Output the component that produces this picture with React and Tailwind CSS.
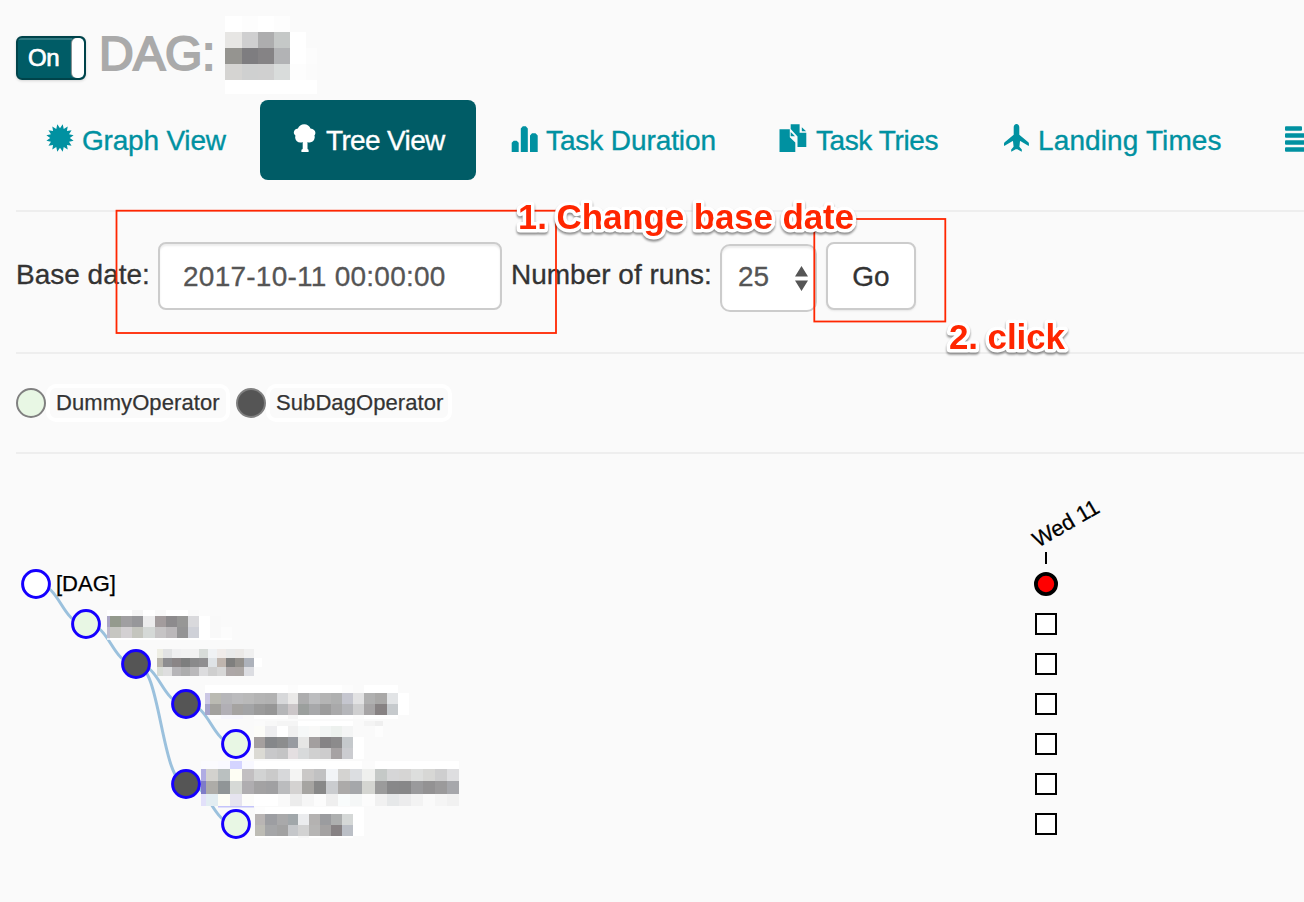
import React from "react";

const TITLE_MOSAIC = {
  xs: [225, 242, 258, 274, 290, 306, 317],
  ys: [16, 32, 48, 64, 80, 94],
  rows: [
    "#fff #fdfdfd #fff #fdfdfd - -",
    "#e7e6e4 #cfcfd0 #adadae #c5c8c7 #fff -",
    "#959490 #7e7d80 #858385 #b2b3b5 #fff #fcfcfc",
    "#d5d4d2 #cfd0d0 #d0d0d0 #d9dcdb #fdfdfd #fbfbfb",
    "#fff #fff #fff #fff #fff #fff",
  ],
};

const LABEL_MOSAICS = [
  {
    xs: [107, 110, 121, 132, 143, 155, 166, 177, 188, 199, 210, 221, 232],
    ys: [610, 616, 627, 638, 640],
    rows: [
      "#fff #fff #fff #f5f5f5 #fff #f9f9f9 #fff #fff #f9f9f9 #fbfbfb - -",
      "#aaa5c4 #949a8d #a09fa1 #97979a #ececed #a39c9d #8d8b8d #979796 #d9d9dc #fff #f9f9f9 -",
      "#bfbccc #c6c6c1 #d3d0d2 #c4c5be #d5d9d7 #c6c4c5 #bbb8ba #949495 #cfd1d8 #fff #f9f9f9 #fcfcfc",
      "#e8f4fa #fff #fff #fff #fff #fff #fff #fff #fff #fff #fff #fff",
    ],
  },
  {
    xs: [157, 163, 172, 181, 190, 199, 208, 217, 226, 235, 244, 254, 262],
    ys: [649, 658, 667, 676],
    rows: [
      "#eeeee4 #e2e3e4 #f0f0f1 #f2f2f2 #f2f2f2 #d8dcd9 #f0f2f4 #f0ecea #e9eaea #ebe9e7 #f0f0f0 -",
      "#b9b6ad #8d8d90 #8a8586 #7d7e7e #8a8a8b #8f8e90 #dfe3e6 #bfb5ae #7f7f7e #93908c #adb2bb #fff",
      "#d8dcd6 #dededf #b6b5b8 #adadae #bab9bb #dcdcde #cfcfcf #d7d7d7 #ada7a7 #aca7a5 #dcdde2 -",
    ],
  },
  {
    xs: [205, 210, 221, 232, 243, 254, 265, 277, 288, 298, 309, 320, 331, 342, 353, 364, 375, 387, 398, 409],
    ys: [685, 693, 704, 715, 719],
    rows: [
      "#fff #fff #fff #fff #fff #fff #fff #fff #fcfcfc #fff #fff #fff #fff #fcfcfc #fafafa #fff #fff #fff -",
      "#ccc8e4 #babab2 #b6b6b9 #bbbbbd #b9b9b9 #b4b4b4 #b2b2b2 #d7d8da #eae9e8 #adadae #bcbdbf #b4b4b4 #afb0b0 #c5c6cf #e2e2e3 #b0b0b0 #a9a8a7 #e2e4e6 #fff",
      "#a7a5cb #a2a19d #b1afb5 #a5a3a1 #a3a4a6 #9b9b9b #969696 #b5b6b8 #cbc6c8 #9b9f9d #a7a8aa #9c9c9c #a9a9aa #b5b6ba #cfcfd0 #a6a4a5 #878283 #c6cacd #fff",
      "- #fcfcfc #f7f7fd #f7f7fd #fafafa #fff #fff #fdfdfd #f5f5f5 #fff #fff #fff #fff #fff #fcfcfc #fff #fff #fff -",
    ],
  },
  {
    xs: [254, 265, 277, 288, 298, 309, 320, 331, 342, 353, 364, 375, 383],
    ys: [721, 726, 737, 748, 759],
    rows: [
      "#fbfbfb #f8f8f8 #f5f5f5 #f5f5f5 #fff #fff #fff #fff #fff #fafafa #f4f4f4 #efefef",
      "#fcfcf8 #eeeef0 #fff #f0f0f0 #f6f8f8 #f9f9f8 #f2f5f4 #edf1ee #f4f5f5 - - #fdfdfd",
      "#a5a09f #85878a #8c8d8e #989ba1 #e6e6e5 #a39f9f #858385 #8c8b8c #c5c9cc #fff - -",
      "#dbdad4 #c8c8ca #c4c4c5 #e4dfe1 #d8dadb #d0d0d0 #cdcccd #a6a2a3 #cbccd0 #fff - -",
    ],
  },
  {
    xs: [201, 206, 218, 230, 242, 254, 266, 278, 290, 302, 314, 326, 338, 350, 362, 375, 387, 399, 411, 423, 435, 447, 459],
    ys: [761, 769, 781, 794, 806],
    rows: [
      "#fbfbfe #fbfbfe #f9f9ff #d4d4ff #f8f8ff #fff #fff #fff #fff #fff #fff #fff #fff #fff #fbfbfb #fff #fff #fff #fff #fff #fff #fff",
      "#b0ace2 #d3d2ce #bac0c0 #fefef4 #c2bfc1 #d2d3d3 #cacaca #d7d8da #f4f4f3 #cac8c7 #c1c1c2 #f2f4f7 #d4d3d1 #dcdee1 #eff0ee #c5c9c7 #d6d6d7 #d6d5d4 #dddedd #d7d7d5 #cececf #dedee0",
      "#7e7bc8 #adaca8 #909597 #d6d9d6 #afadb0 #a3a2a3 #a0a0a2 #bbbcbe #d4d2d1 #a6a4a1 #888888 #cacccf #acaaa9 #a5a7aa #d4d5d1 #9b9b9b #888889 #878788 #9a9a9c #939293 #9b9a9b #a6a7ab",
      "#e2e0fa #e2edf2 #fdfdf6 #e6e4ef #fcfcfa #fff #fff #fafafa #ececec #f6f6f6 #fcfcfc #efefef #f9fcfc #f5f7f7 #fcfcfc #f1f1f1 #e6e8e9 #ececed #f3f3f3 #fafafa #f5f5f5 #f1f1f1",
    ],
  },
  {
    xs: [255, 265, 277, 288, 298, 309, 320, 331, 342, 353, 364],
    ys: [807, 814, 825, 836, 838],
    rows: [
      "#fdfdfd #fff #fff #fff #fff #fff #fff #fff #fff #fff",
      "#b9b5b4 #9d9ea2 #a9a9aa #a1a7aa #ebecee #b4b2b1 #9b9c9f #adafaf #d5d8d7 #fff",
      "#bdbcb5 #a5a6a8 #a2a2a2 #c5c7ca #d2d2d2 #b6b5b4 #a4a2a2 #878284 #bbbfc6 #fff",
      "#fff #fff #fff #fff #f7f7f7 #fff #fff #fff #fff -",
    ],
  },
];

function Mosaic({ xs, ys, rows }) {
  return (
    <g shapeRendering="crispEdges">
      {rows.map((row, r) =>
        row.split(" ").map((c, i) =>
          c === "-" ? null : (
            <rect key={r + "-" + i} x={xs[i]} y={ys[r]} width={xs[i + 1] - xs[i]} height={ys[r + 1] - ys[r]} fill={c} />
          )
        )
      )}
    </g>
  );
}

const burst = Array.from({ length: 32 }, (_, i) => {
  const a = ((i + 1) * Math.PI) / 16;
  const r = i % 2 === 0 ? 13.9 : 9.8;
  return (14 + r * Math.cos(a)).toFixed(2) + "," + (14 + r * Math.sin(a)).toFixed(2);
}).join(" ");

const ICONS = {
  burst: <polygon points={burst} />,
  tree: (
    <path d="M14.200.2c3 0 5.400 1.700 6.300 4.300 2.900.4 4.900 2 4.900 4.300 0 1.200-.4 2-1 2.800.3.7.4 1.400.3 2.200-.4 2.800-2.600 4.800-5.200 4.700-.9 0-1.400-.2-2-.6V24.500c0 .8.4 1.100 1.100 1.200v2.300h-7.200v-2.300c.8-.1 1.300-.4 1.300-1.200V17.900c-.7.5-1.400.7-2.300.7-2.700 0-4.900-1.900-5.200-4.600-.1-.8 0-1.500.3-2.200-.8-.8-1.700-1.800-1.700-3.200 0-2.200 1.600-4 4.100-4.200C8.900 2 11.200.2 14.200.2z" />
  ),
  bars: (
    <path d="M1.700 28V18.700l2-2h3l2 2V28zM10.800 28V4.500l2-2.300h3l2 2.300V28zM20 28V11.400l2-2.200h3.500l2.200 2.200V28z" />
  ),
  copy: (
    <g>
      <path d="M-.5 5.200H9.800V13.200l5.500 5.300V28H-.5z" />
      <path d="M10.700 8l4.300 4.300h-4.300z" />
      <path d="M10.700.2h8.900v8.500h6.700v14.300h-8.800V12.500L10.700 5z" />
      <path d="M21.800 3.200l4.300 4h-4.300z" />
    </g>
  ),
  plane: (
    <path d="M14.500 0c1.700 0 2.800 1.300 2.800 3.200v7.500l9.300 7.800c.5.6.4 2.500.1 3.600l-8.400-5-.3.200-.6 5.500 2.400 2.600v2.300l-4.500-2.500h-1.600l-4.500 2.500v-2.300l2.400-2.600-.6-5.500-.3-.2-8.500 5c-.3-1.100-.4-3 .2-3.600l9.300-7.800V3.200C11.700 1.300 12.800 0 14.500 0z" />
  ),
  lines: (
    <g>
      <rect x="-1" y="2.200" width="17" height="4.600" rx="1" />
      <rect x="-1" y="9.200" width="29" height="4.600" rx="1" />
      <rect x="-1" y="16.200" width="24" height="4.600" rx="1" />
      <rect x="-1" y="23.200" width="29" height="4.600" rx="1" />
    </g>
  ),
};

function Tab({ icon, label, width, active }) {
  return (
    <a
      className={
        "flex h-20 shrink-0 items-center gap-2 rounded-lg pl-[30px] text-[28px] whitespace-nowrap [-webkit-text-stroke:0.35px_currentColor] " +
        width +
        (active ? " bg-[#005c66] text-white" : " text-[#0091a1]")
      }
    >
      <svg className="h-7 w-7 shrink-0 overflow-visible" viewBox="0 0 28 28" fill="currentColor">
        <g transform="translate(0,-2)">{ICONS[icon]}</g>
      </svg>
      <span className="pt-0.5">{label}</span>
    </a>
  );
}

function Operator({ name, fill, width }) {
  return (
    <div className="flex items-center">
      <span className={"h-[30px] w-[30px] rounded-full border-2 border-[#808080] " + fill} />
      <span className={"flex h-[38px] items-center rounded-[10px] border-4 border-white pb-0.5 pl-1.5 text-[22px] tracking-[0.08px] whitespace-nowrap [-webkit-text-stroke:0.25px_currentColor] " + width}>
        {name}
      </span>
    </div>
  );
}

const NODES = [
  [36, 584, "#fff"],
  [86, 624, "#e8f7e4"],
  [136, 664, "#555"],
  [186, 704, "#555"],
  [236, 744, "#e8f7e4"],
  [186, 784, "#555"],
  [236, 824, "#e8f7e4"],
];
const LINKS = [[0, 1], [1, 2], [2, 3], [3, 4], [2, 5], [5, 6]];

function TreeChart() {
  return (
    <svg className="block h-[448px] w-[1304px]" viewBox="0 454 1304 448" fontFamily="'Liberation Sans', Arial, sans-serif">
      {LINKS.map(([a, b]) => {
        const [x0, y0] = NODES[a];
        const [x1, y1] = NODES[b];
        const m = (x0 + x1) / 2;
        return <path key={a + "-" + b} d={`M${x0},${y0}C${m},${y0} ${m},${y1} ${x1},${y1}`} fill="none" stroke="#9bc1dd" strokeWidth="3" />;
      })}
      {LABEL_MOSAICS.map((m, i) => (
        <Mosaic key={i} {...m} />
      ))}
      <rect x="218" y="806" width="36" height="1.500" fill="#c4c4fa" />
      {NODES.map(([x, y, f]) => (
        <circle key={x + "-" + y} cx={x} cy={y} r="13.400" fill={f} stroke="#1500ff" strokeWidth="3" />
      ))}
      <g fontSize="22" stroke="#000" strokeWidth="0.250">
        <text x="56" y="591">[DAG]</text>
        <text transform="translate(1038,548) rotate(-30)" textLength="73">Wed 11</text>
      </g>
      <rect x="1045" y="552" width="2" height="12" />
      <circle cx="1046" cy="584" r="10.100" fill="#f00" stroke="#000" strokeWidth="3.800" />
      {[624, 664, 704, 744, 784, 824].map((y) => (
        <rect key={y} x="1036" y={y - 10} width="20" height="20" fill="#fff" stroke="#000" strokeWidth="2" />
      ))}
    </svg>
  );
}

function Annotations() {
  return (
    <svg
      className="pointer-events-none absolute top-0 left-0 h-[902px] w-[1304px]"
      viewBox="0 0 1304 902"
      fontFamily="'Liberation Sans', Arial, sans-serif"
    >
      <g fill="none" stroke="#ff2600" strokeWidth="1.800">
        <rect x="116.500" y="210.700" width="439.500" height="122.300" />
        <rect x="814.300" y="219" width="131" height="102.500" />
      </g>
      <g
        className="drop-shadow-[0_2px_1px_rgba(0,0,0,0.45)]"
        stroke="#fff"
        strokeWidth="7"
        strokeLinejoin="round"
        fill="#ff2600"
        paintOrder="stroke"
        fontSize="35"
        fontWeight="700"
      >
        <text x="518" y="229" textLength="336">1. Change base date</text>
        <text x="949" y="349" textLength="116">2. click</text>
      </g>
    </svg>
  );
}

export default function App() {
  return (
    <div className="relative h-[902px] w-[1304px] overflow-hidden bg-[#fafafa] font-['Liberation_Sans',Arial,sans-serif] text-[#333]">
      <header className="flex h-[100px] pl-4">
        <div className="mt-9 flex h-11 w-[70px] overflow-hidden rounded-md border-2 border-[#00434a] bg-[#005c66] shadow-[0_1px_3px_rgba(0,0,0,0.15)]">
          <span className="flex flex-1 items-center pl-2.5 text-[24px] tracking-[-0.5px] text-white shadow-[inset_0_2px_0_rgba(255,255,255,0.18)] [-webkit-text-stroke:0.7px_white]">On</span>
          <span className="w-3 rounded-[5px] bg-white shadow-[-1px_0_1px_#999]" />
        </div>
        <h1 className="mt-[27px] ml-[13px] w-[126px] text-[48px] leading-[54px] tracking-[-0.3px] whitespace-nowrap text-[#aaa] [-webkit-text-stroke:2px_#aaa]">DAG:</h1>
        <svg className="mt-4 h-[78px] w-[92px]" viewBox="225 16 92 78">
          <Mosaic {...TITLE_MOSAIC} />
        </svg>
      </header>
      <nav className="flex gap-1 pl-4">
        <Tab icon="burst" label="Graph View" width="w-[240px] tracking-[-0.2px]" />
        <Tab icon="tree" label="Tree View" width="w-[216px] tracking-[-0.65px]" active />
        <Tab icon="bars" label="Task Duration" width="w-[266px] tracking-[-0.1px]" />
        <Tab icon="copy" label="Task Tries" width="w-[218px] tracking-[-0.4px]" />
        <Tab icon="plane" label="Landing Times" width="w-[280px] tracking-[0.12px]" />
        <Tab icon="lines" label="" width="w-[200px]" />
      </nav>
      <hr className="mt-[30px] ml-4 border-t-2 border-[#eee]" />
      <form className="flex h-[140px] items-start pt-[30px] pl-4 text-[28px] whitespace-nowrap [-webkit-text-stroke:0.3px_currentColor]" onSubmit={(e) => e.preventDefault()}>
        <label className="w-[142px] pt-[17px] leading-8">Base date:</label>
        <input
          className="h-[68px] w-[344px] rounded-lg border-2 border-[#ccc] bg-white pt-0.5 pl-[23px] tracking-[0.25px] text-[#555] shadow-[inset_0_2px_2px_rgba(0,0,0,0.075)] outline-none"
          defaultValue="2017-10-11 00:00:00"
        />
        <label className="ml-[9px] w-[209px] pt-[17px] leading-8">Number of runs:</label>
        <div className="mt-0.5 flex h-[68px] w-[97px] items-center justify-between rounded-[10px] border-2 border-[#ccc] bg-white pr-[7px] pb-[3px] pl-4 text-[#555] shadow-[inset_0_2px_2px_rgba(0,0,0,0.075)]">
          25
          <svg className="mt-1 h-[25px] w-[13px]" viewBox="0 0 13 25" fill="#555">
            <path d="M6.500 0L13 10.500H0zM6.500 25L13 14.500H0z" />
          </svg>
        </div>
        <button className="ml-[9px] h-[68px] w-[90px] rounded-lg border-2 border-[#ccc] bg-white pt-0.5 shadow-[0_1px_2px_rgba(0,0,0,0.08)]">Go</button>
      </form>
      <hr className="ml-4 border-t-2 border-[#eee]" />
      <div className="flex h-[98px] items-start gap-1.5 pt-[30px] pl-4">
        <Operator name="DummyOperator" fill="bg-[#e8f7e4]" width="w-[184px]" />
        <Operator name="SubDagOperator" fill="bg-[#555]" width="w-[186px]" />
      </div>
      <hr className="ml-4 border-t-2 border-[#eee]" />
      <TreeChart />
      <Annotations />
    </div>
  );
}
